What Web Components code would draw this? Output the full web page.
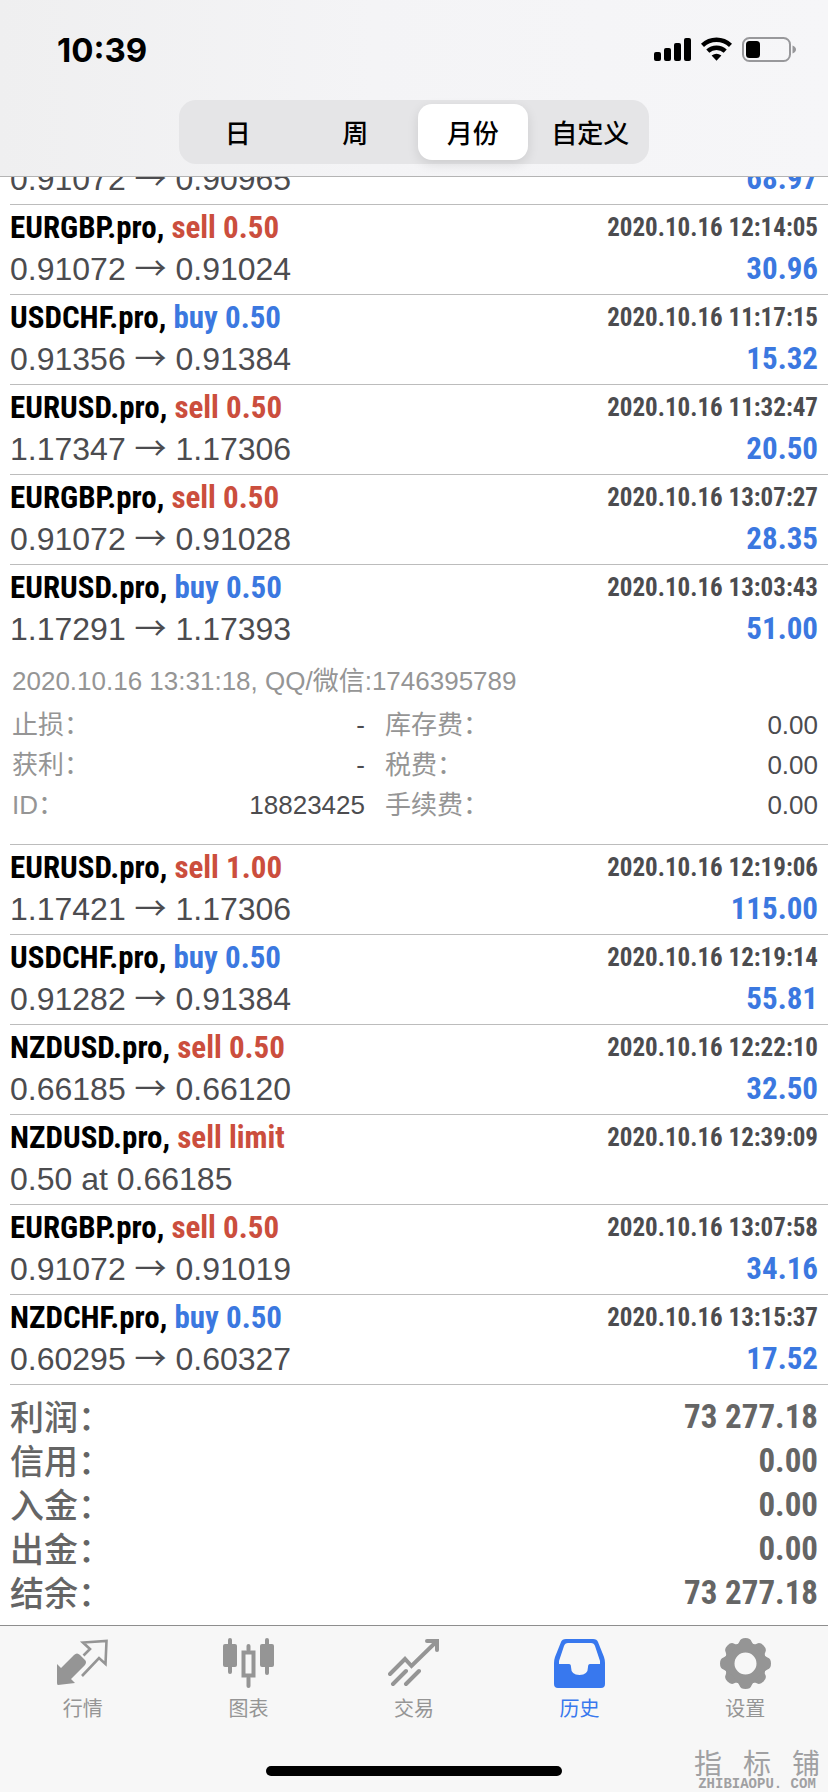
<!DOCTYPE html>
<html lang="zh-CN">
<head>
<meta charset="utf-8">
<meta name="viewport" content="width=device-width, initial-scale=1">
<title>历史</title>
<style>
html, body { margin: 0; height: 100%; }
body {
  --blue: #3b78e0;
  --active: #3878ee;
  --red: #cb4e3d;
  --ink: #4c4c4f;
  --muted: #959595;
  --line: #bcbcbc;
  --narrow: "Roboto Condensed", "Liberation Sans Narrow", "Noto Sans CJK SC", sans-serif;
  background: #fff;
  color: #000;
  font-family: "Liberation Sans", "Noto Sans CJK SC", sans-serif;
}
</style>
</head>
<body>
<history-app></history-app>

<script>
class Base extends HTMLElement {
  render(html) {
    this.attachShadow({ mode: "open" }).innerHTML = html;
  }
}

customElements.define("status-bar", class extends Base {
  connectedCallback() {
    this.render(`
<style>
:host { display: flex; align-items: center; justify-content: space-between; height: 100px; padding: 0 32px 0 57px; box-sizing: border-box; }
time { font: 700 33px/40px Inter, sans-serif; }
svg { display: block; width: 142px; height: 28px; }
</style>
<time>10:39</time>
<svg viewBox="0 0 142 28" role="img" aria-label="信号、无线网络、电量">
  <rect x="0" y="16" width="7" height="9" rx="2"/>
  <rect x="10" y="12" width="7" height="13" rx="2"/>
  <rect x="20" y="7" width="7" height="18" rx="2"/>
  <rect x="30" y="2" width="7" height="23" rx="2"/>
  <g fill="none" stroke="#000" stroke-width="4.4">
    <path d="M48.500 9.300A20.500 20.500 0 0 1 76.500 9.300"/>
    <path d="M53.800 15.200A12.600 12.600 0 0 1 71.200 15.200"/>
  </g>
  <path d="M57.600 19.600Q62.500 16 67.400 19.600L62.500 24.700Z"/>
  <rect x="89" y="2" width="47" height="23" rx="6.500" fill="none" stroke="#98989b" stroke-width="2"/>
  <rect x="92" y="5" width="14" height="17" rx="3.500"/>
  <path d="M138.500 9.500Q142 11 142 13.500T138.500 17.500Z" fill="#98989b"/>
</svg>`);
  }
});

customElements.define("period-picker", class extends Base {
  connectedCallback() {
    const active = this.getAttribute("active");
    this.render(`
<style>
:host { display: grid; grid-template-columns: repeat(4, 1fr); width: 470px; max-width: 100%; height: 64px; border-radius: 17px; background: #e5e5e7; }
button { all: unset; box-sizing: border-box; position: relative; margin: 4px; border-radius: 14px; text-align: center; font: 500 26px/54px "Noto Sans CJK SC", sans-serif; cursor: pointer; }
button:first-child::after { content: ""; position: absolute; right: -5px; top: 10px; bottom: 10px; width: 2px; background: #cfcfd1; }
button[aria-pressed=true] { background: #fff; box-shadow: 0 4px 12px #0000001c; }
button:focus-visible { outline: 2px solid var(--blue); }
</style>
${["日", "周", "月份", "自定义"].map(t => `<button type="button" aria-pressed="${t === active}">${t}</button>`).join("")}`);
  }
});

customElements.define("trade-row", class extends Base {
  connectedCallback() {
    const at = n => this.getAttribute(n) || "";
    const prices = at("to")
      ? `<span>${at("from")}</span> <span class="arrow">→</span> <span>${at("to")}</span>`
      : at("from");
    // A row scrolled mostly out of view carries only its price line.
    const head = at("symbol")
      ? `<div class="line head"><h2>${at("symbol")}, <span class="side">${at("side")}</span></h2><time>2020.10.16 ${at("time")}</time></div>`
      : "";
    this.render(`
<style>
:host { display: block; flex: none; margin-left: 10px; border-bottom: 1px solid var(--line); }
article { padding: 5px 10px 5px 0; }
.line { display: flex; justify-content: space-between; align-items: center; }
.head { height: 36px; margin-bottom: 3px; }
.body { height: 40px; }
h2, p { margin: 0; white-space: pre; }
h2 { font: 700 31px/36px var(--narrow); }
.side { color: var(--${at("side").startsWith("buy") ? "blue" : "red"}); }
time { font: 700 25px/36px var(--narrow); color: var(--ink); }
p { font-size: 32px; line-height: 40px; color: var(--ink); }
.arrow { font-family: "Noto Sans CJK SC", sans-serif; line-height: 1; }
data { font: 700 31px/40px var(--narrow); color: var(--blue); }
</style>
<article>
  ${head}
  <div class="line body"><p>${prices}</p><data value="${at("profit")}">${at("profit")}</data></div>
</article>
<slot></slot>`);
  }
});

customElements.define("trade-details", class extends Base {
  connectedCallback() {
    const cells = [["止损：", "-"], ["库存费：", "0.00"], ["获利：", "-"], ["税费：", "0.00"], ["ID：", "18823425"], ["手续费：", "0.00"]];
    this.render(`
<style>
:host { display: block; padding: 7px 10px 19px 2px; font-size: 26px; line-height: 40px; color: var(--muted); }
p { margin: 0 0 4px; }
dl { display: grid; grid-template-columns: 353fr 433fr; column-gap: 20px; margin: 0; }
div { display: flex; justify-content: space-between; height: 40px; }
dd { margin: 0; color: var(--ink); }
</style>
<p>2020.10.16 13:31:18, QQ/微信:1746395789</p>
<dl>${cells.map(([k, v]) => `<div><dt>${k}</dt><dd>${v}</dd></div>`).join("")}</dl>`);
  }
});

customElements.define("account-summary", class extends Base {
  connectedCallback() {
    const rows = [["利润：", "73 277.18"], ["信用：", "0.00"], ["入金：", "0.00"], ["出金：", "0.00"], ["结余：", "73 277.18"]];
    this.render(`
<style>
:host { display: block; flex: none; padding: 10px; color: #656565; }
dl { margin: 0; }
div { display: flex; justify-content: space-between; height: 44px; }
dt { font: 500 34px/42px "Noto Sans CJK SC", sans-serif; }
dd { margin: 0; font: 700 33px/44px var(--narrow); }
</style>
<dl>${rows.map(([k, v]) => `<div><dt>${k}</dt><dd>${v}</dd></div>`).join("")}</dl>`);
  }
});

const teeth = [0, 45, 90, 135, 180, 225, 270, 315]
  .map(a => `<path transform="rotate(${a})" d="M-10 -18Q-7 -19 -6 -22Q-5 -25.500 0 -25.500T6 -22Q7 -19 10 -18Z"/>`).join("");

const icons = {
  quotes: `<path d="M0 26L4 30L17 17Q20 14 23 17L28 22Q30 24 28 27L14 41L18 45L1 47Q0 47 0 45Z"/><path fill="none" stroke="currentColor" stroke-width="2.600" d="M25 38L42 20L48.500 26L49.500 3L26 4.500L33 11L26.500 17.500"/>`,
  chart: `<rect y="6" width="14" height="23" rx="2"/><rect x="5" width="4" height="36" rx="2"/><rect x="37" y="6" width="14" height="23" rx="2"/><rect x="42" width="4" height="37" rx="2"/><rect x="20.500" y="14.500" width="10" height="23" fill="none" stroke="currentColor" stroke-width="4"/><rect x="23.500" y="6" width="4" height="8" rx="2"/><rect x="23.500" y="38" width="4" height="12" rx="2"/>`,
  trade: `<path fill="none" stroke="currentColor" stroke-width="4" stroke-linecap="round" d="M2 36L17 21L23.500 28L48 4M39 3H49V12M5 46L18 33M18 46L31 33"/>`,
  history: `<path fill-rule="evenodd" d="M12 1H39Q43 1 44 4L50 19Q51 22 51 25V46Q51 50 47 50H4Q0 50 0 46V25Q0 22 1 19L7 4Q8 1 12 1ZM14 5Q11 5 10 8L5 23V26H15Q17 26 17 29Q17 37 25.500 37T34 29Q34 26 36 26H46V23L41 8Q40 5 37 5Z"/>`,
  settings: `<g transform="translate(25.500 25.500)"><circle r="16" fill="none" stroke="currentColor" stroke-width="10"/>${teeth}</g>`
};

customElements.define("tab-item", class extends Base {
  connectedCallback() {
    const on = this.hasAttribute("active");
    this.render(`
<style>
:host { display: block; color: ${on ? "var(--active)" : "var(--muted)"}; }
a { display: flex; flex-direction: column; align-items: center; gap: 4px; color: inherit; text-decoration: none; font: 400 20px/30px "Noto Sans CJK SC", sans-serif; }
svg { width: 51px; height: 51px; }
</style>
<a href="#${this.getAttribute("icon")}"${on ? ' aria-current="page"' : ""}><svg viewBox="0 0 51 51" fill="currentColor" aria-hidden="true">${icons[this.getAttribute("icon")]}</svg><slot></slot></a>`);
  }
});

customElements.define("site-mark", class extends Base {
  connectedCallback() {
    this.render(`
<style>
:host { display: block; width: 126px; color: #a0a0a2; }
.name { display: flex; justify-content: space-between; font: 400 28px/30px "Noto Sans CJK SC", sans-serif; }
.site { font: 700 14px/14px "Liberation Mono", monospace; text-align: center; white-space: nowrap; }
</style>
<div class="name"><span>指</span><span>标</span><span>铺</span></div>
<div class="site">ZHIBIAOPU. COM</div>`);
  }
});

customElements.define("history-app", class extends Base {
  connectedCallback() {
    this.render(`
<style>
:host { display: flex; flex-direction: column; height: 100vh; }
header { flex: none; background: linear-gradient(to right, #efeff0, #f4f4f6 45%, #f6f6f8); border-bottom: 1px solid #b4b4b4; padding-bottom: 12px; }
period-picker { margin: 0 auto; }
main { flex: 1; min-height: 0; overflow: hidden; display: flex; flex-direction: column; justify-content: flex-end; }
footer { flex: none; position: relative; height: 166px; background: #f7f7f7; border-top: 1px solid #8e8e8e; }
nav { display: grid; grid-template-columns: repeat(5, 1fr); padding-top: 12px; }
.home { position: absolute; left: 50%; bottom: 16px; width: 296px; height: 10px; margin-left: -148px; border-radius: 5px; background: #000; }
site-mark { position: absolute; right: 8px; bottom: 1px; }
</style>
<header><status-bar></status-bar><period-picker active="月份"></period-picker></header>
<main>
  <trade-row from="0.91072" to="0.90965" profit="68.97"></trade-row>
  <trade-row symbol="EURGBP.pro" side="sell 0.50" time="12:14:05" from="0.91072" to="0.91024" profit="30.96"></trade-row>
  <trade-row symbol="USDCHF.pro" side="buy 0.50" time="11:17:15" from="0.91356" to="0.91384" profit="15.32"></trade-row>
  <trade-row symbol="EURUSD.pro" side="sell 0.50" time="11:32:47" from="1.17347" to="1.17306" profit="20.50"></trade-row>
  <trade-row symbol="EURGBP.pro" side="sell 0.50" time="13:07:27" from="0.91072" to="0.91028" profit="28.35"></trade-row>
  <trade-row symbol="EURUSD.pro" side="buy 0.50" time="13:03:43" from="1.17291" to="1.17393" profit="51.00"><trade-details></trade-details></trade-row>
  <trade-row symbol="EURUSD.pro" side="sell 1.00" time="12:19:06" from="1.17421" to="1.17306" profit="115.00"></trade-row>
  <trade-row symbol="USDCHF.pro" side="buy 0.50" time="12:19:14" from="0.91282" to="0.91384" profit="55.81"></trade-row>
  <trade-row symbol="NZDUSD.pro" side="sell 0.50" time="12:22:10" from="0.66185" to="0.66120" profit="32.50"></trade-row>
  <trade-row symbol="NZDUSD.pro" side="sell limit" time="12:39:09" from="0.50 at 0.66185"></trade-row>
  <trade-row symbol="EURGBP.pro" side="sell 0.50" time="13:07:58" from="0.91072" to="0.91019" profit="34.16"></trade-row>
  <trade-row symbol="NZDCHF.pro" side="buy 0.50" time="13:15:37" from="0.60295" to="0.60327" profit="17.52"></trade-row>
  <account-summary></account-summary>
</main>
<footer>
  <nav>
    <tab-item icon="quotes">行情</tab-item>
    <tab-item icon="chart">图表</tab-item>
    <tab-item icon="trade">交易</tab-item>
    <tab-item icon="history" active>历史</tab-item>
    <tab-item icon="settings">设置</tab-item>
  </nav>
  <div class="home"></div>
  <site-mark></site-mark>
</footer>`);
  }
});
</script>
</body>
</html>
